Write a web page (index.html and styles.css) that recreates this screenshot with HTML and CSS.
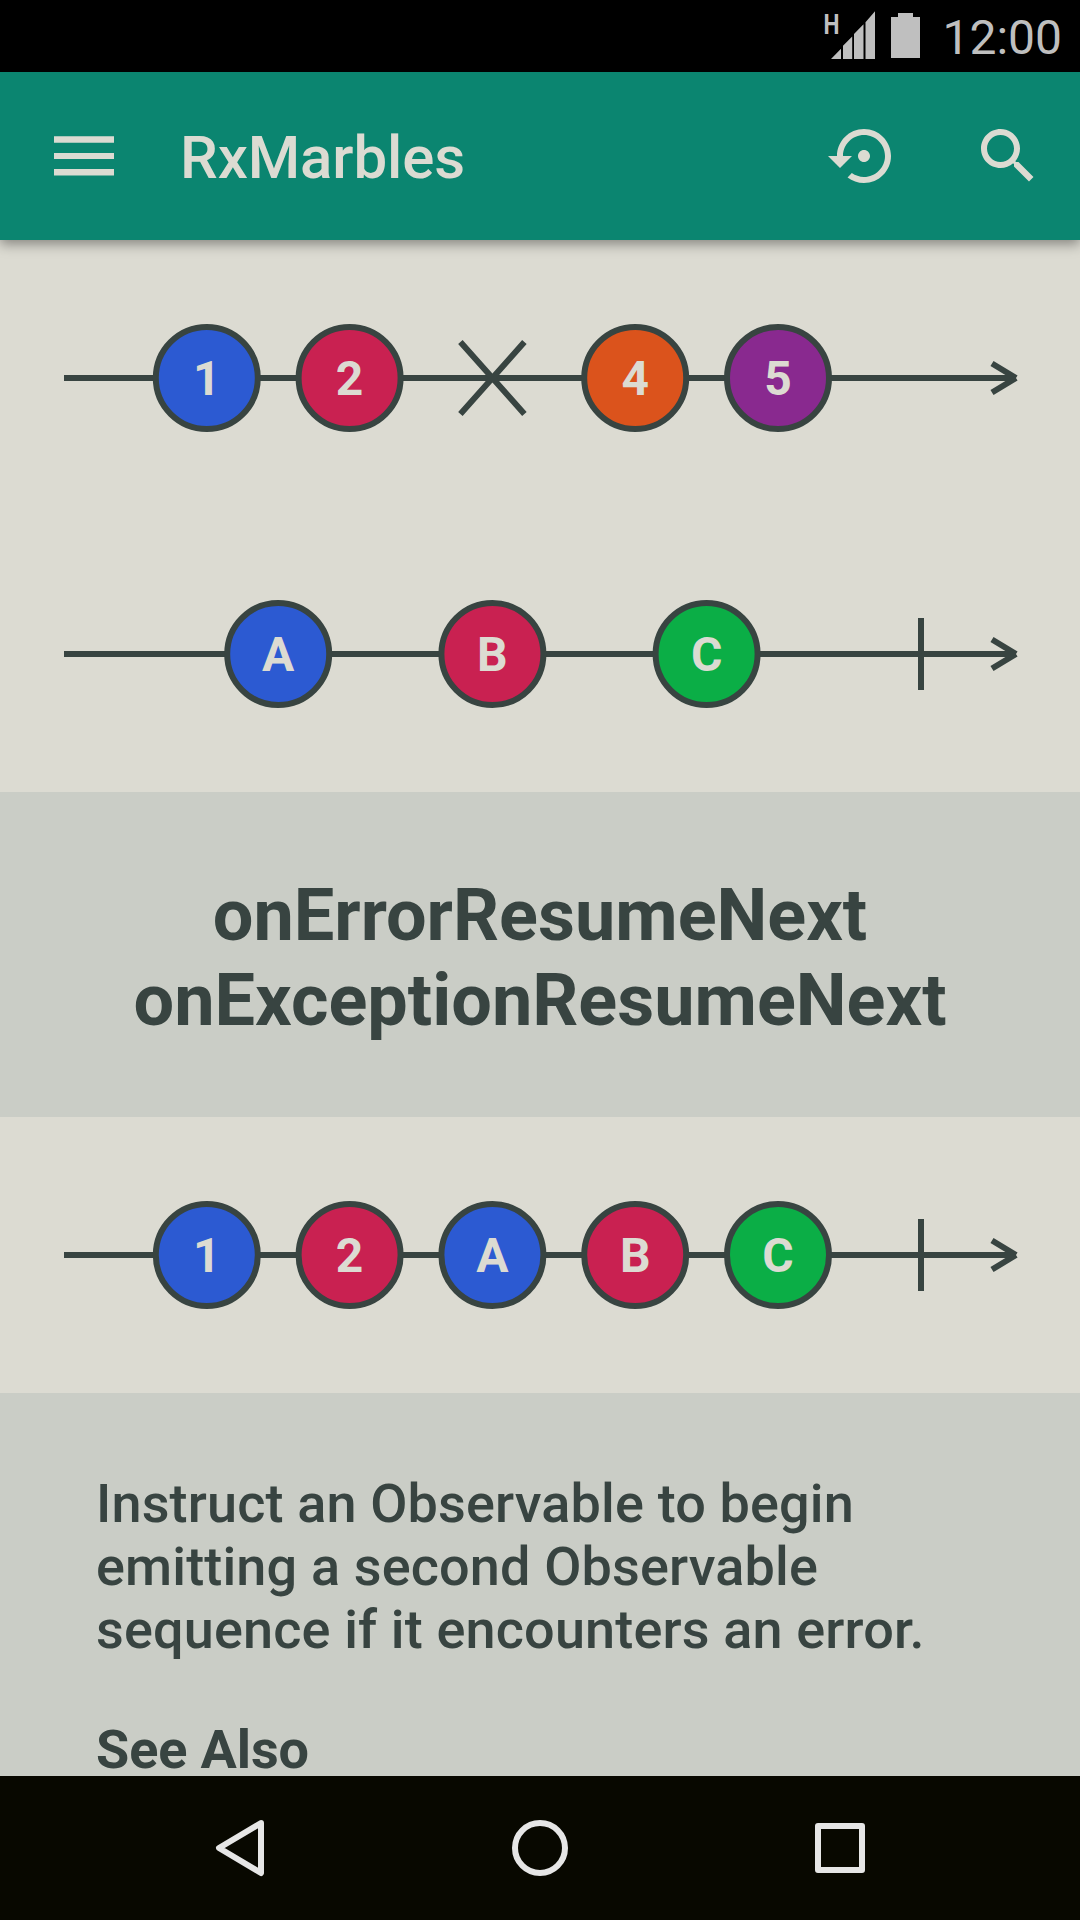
FILE: index.html
```html
<!DOCTYPE html>
<html lang="en">
<head>
<meta charset="utf-8">
<title>RxMarbles</title>
<link rel="stylesheet" href="styles.css">
</head>
<body>
<div class="screen">
  <div class="status-bar">
    <svg class="signal" width="54" height="50" viewBox="0 0 54 50">
      <text class="network" x="-0.4" y="24" textLength="16" lengthAdjust="spacingAndGlyphs">H</text>
      <path d="M7 49L17 38.7V49zM19 49V35.7L28.2 26.5V49zM30 49V24L39.5 14.2V49zM41.5 49V12.2L51 1.2V49z"/>
    </svg>
    <svg class="battery" width="29" height="45" viewBox="0 0 29 45">
      <path d="M0 4H7V0H22V4H29V45H0z"/>
    </svg>
    <span class="clock">12:00</span>
  </div>

  <header class="app-bar">
    <svg class="menu" width="60" height="40" viewBox="0 0 60 40">
      <path d="M0 .3H60V6.7H0zM0 17H60V23H0zM0 33.1H60V39.6H0z"/>
    </svg>
    <h1 class="title">RxMarbles</h1>
    <svg class="action" width="72" height="72" viewBox="0 0 24 24">
      <path d="M14 12c0-1.1-.9-2-2-2s-2 .9-2 2 .9 2 2 2 2-.9 2-2zm-2-9c-4.97 0-9 4.03-9 9H0l4 4 4-4H5c0-3.87 3.13-7 7-7s7 3.13 7 7-3.13 7-7 7c-1.51 0-2.91-.49-4.06-1.3l-1.42 1.44C8.04 20.3 9.94 21 12 21c4.97 0 9-4.03 9-9s-4.03-9-9-9z"/>
    </svg>
    <svg class="action" width="72" height="72" viewBox="0 0 24 24">
      <path d="M15.5 14h-.79l-.28-.27C15.41 12.59 16 11.11 16 9.5 16 5.91 13.09 3 9.5 3S3 5.91 3 9.5 5.91 16 9.5 16c1.61 0 3.09-.59 4.23-1.57l.27.28v.79l5 4.99L20.49 19l-4.99-5zm-6 0C7.01 14 5 11.99 5 9.5S7.01 5 9.5 5 14 7.01 14 9.5 11.99 14 9.5 14z"/>
    </svg>
  </header>

  <main class="content">
    <svg class="timeline" width="1080" height="276" viewBox="0 0 1080 276">
      <path class="axis" d="M64 138H1016M992 123.5L1016 138M992 152.5L1016 138"/>
      <path class="axis" d="M460.4 102L524.4 174M524.4 102L460.4 174"/>
      <g class="marble blue"><circle cx="206.8" cy="138" r="51"/><text x="206.8" y="155">1</text></g>
      <g class="marble red"><circle cx="349.6" cy="138" r="51"/><text x="349.6" y="155">2</text></g>
      <g class="marble orange"><circle cx="635.2" cy="138" r="51"/><text x="635.2" y="155">4</text></g>
      <g class="marble purple"><circle cx="778" cy="138" r="51"/><text x="778" y="155">5</text></g>
    </svg>
    <svg class="timeline" width="1080" height="276" viewBox="0 0 1080 276">
      <path class="axis" d="M64 138H1016M992 123.5L1016 138M992 152.5L1016 138M921 102V174"/>
      <g class="marble blue"><circle cx="278.2" cy="138" r="51"/><text x="278.2" y="155">A</text></g>
      <g class="marble red"><circle cx="492.4" cy="138" r="51"/><text x="492.4" y="155">B</text></g>
      <g class="marble green"><circle cx="706.6" cy="138" r="51"/><text x="706.6" y="155">C</text></g>
    </svg>
    <h2 class="operator">onErrorResumeNext<br>onExceptionResumeNext</h2>
    <svg class="timeline" width="1080" height="276" viewBox="0 0 1080 276">
      <path class="axis" d="M64 138H1016M992 123.5L1016 138M992 152.5L1016 138M921 102V174"/>
      <g class="marble blue"><circle cx="206.8" cy="138" r="51"/><text x="206.8" y="155">1</text></g>
      <g class="marble red"><circle cx="349.6" cy="138" r="51"/><text x="349.6" y="155">2</text></g>
      <g class="marble blue"><circle cx="492.4" cy="138" r="51"/><text x="492.4" y="155">A</text></g>
      <g class="marble red"><circle cx="635.2" cy="138" r="51"/><text x="635.2" y="155">B</text></g>
      <g class="marble green"><circle cx="778" cy="138" r="51"/><text x="778" y="155">C</text></g>
    </svg>
    <section class="description">
      <p>Instruct an Observable to begin<br>emitting a second Observable<br>sequence if it encounters an error.</p>
      <h3>See Also</h3>
    </section>
  </main>

  <nav class="nav-bar">
    <svg width="60" height="60" viewBox="0 0 60 60"><path d="M51 5L9 30L51 55z"/></svg>
    <svg width="60" height="60" viewBox="0 0 60 60"><circle cx="30" cy="30" r="25"/></svg>
    <svg width="60" height="60" viewBox="0 0 60 60"><rect x="8" y="8" width="44" height="44"/></svg>
  </nav>
</div>
</body>
</html>
```

FILE: styles.css
```css
body {
  margin: 0;
  font-family: Roboto, sans-serif;
}

.screen {
  display: flex;
  flex-direction: column;
  width: 1080px;
  height: 1920px;
  overflow: hidden;
  background: #dcdbd2;
  color: #384441;
}

.status-bar {
  display: flex;
  flex: none;
  justify-content: flex-end;
  box-sizing: border-box;
  height: 72px;
  padding: 10px 18px 0 0;
  background: #000;
  color: #bfbfbf;
  fill: #bfbfbf;
}

.network {
  font-size: 28px;
  font-weight: 700;
}

.battery {
  margin: 3px 22px 0 13px;
}

.clock {
  font-size: 48px;
  line-height: 56px;
}

.app-bar {
  z-index: 1;
  display: flex;
  flex: none;
  align-items: center;
  box-sizing: border-box;
  height: 168px;
  padding: 0 36px 0 54px;
  background: #0b8570;
  box-shadow: 0 4px 12px rgba(0, 0, 0, 0.4);
  color: #dcdbd2;
  fill: #dcdbd2;
}

.title {
  flex: 1;
  margin: 4px 0 0 66px;
  font-size: 60px;
  font-weight: 500;
  letter-spacing: -0.1px;
  line-height: 70px;
}

.action + .action {
  margin-left: 72px;
}

.content {
  flex: 1;
  min-height: 0;
  overflow: hidden;
}

.timeline {
  display: block;
}

.axis {
  fill: none;
  stroke: #384441;
  stroke-width: 6;
}

.marble circle {
  stroke: #384441;
  stroke-width: 6;
}

.marble text {
  fill: #dcdbd2;
  font-size: 48px;
  font-weight: 700;
  text-anchor: middle;
}

.blue { fill: #2c5ad2; }
.red { fill: #c92151; }
.orange { fill: #db531c; }
.purple { fill: #89298f; }
.green { fill: #0bae46; }

.operator {
  box-sizing: border-box;
  height: 325px;
  margin: 0;
  padding-top: 81px;
  background: #cacdc6;
  font-size: 72px;
  font-weight: 700;
  line-height: 85px;
  text-align: center;
}

.description {
  height: 500px;
  padding: 79px 96px 0;
  background: #cacdc6;
  font-size: 54px;
  line-height: 63px;
}

.description p {
  margin: 0;
  font-weight: 500;
  letter-spacing: 0.15px;
}

.description h3 {
  margin: 57px 0 0;
  font-size: 54px;
  font-weight: 700;
  letter-spacing: -0.1px;
}

.nav-bar {
  display: flex;
  flex: none;
  align-items: center;
  justify-content: center;
  gap: 240px;
  height: 144px;
  background: #080800;
  fill: none;
  stroke: #e6e6e6;
  stroke-width: 6;
  stroke-linejoin: round;
}
```
